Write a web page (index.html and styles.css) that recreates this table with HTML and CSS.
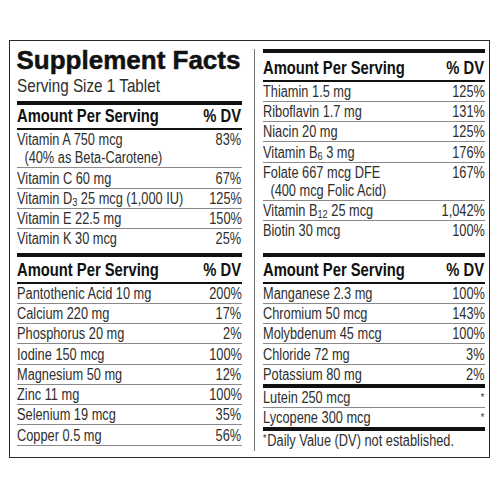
FILE: index.html
```html
<!DOCTYPE html>
<html lang="en">
<head>
<meta charset="utf-8">
<title>Supplement Facts</title>
<link rel="stylesheet" href="styles.css">
</head>
<body>
<div class="label">
  <section class="cell tl">
    <h1 class="title">Supplement Facts</h1>
    <p class="serving"><span class="t">Serving Size 1 Tablet</span></p>
    <div class="bar"></div>
    <div class="head"><span class="t">Amount Per Serving</span><span class="v">% DV</span></div>
    <div class="row"><span class="t">Vitamin A 750 mcg<span class="ind">(40% as Beta-Carotene)</span></span><span class="v">83%</span></div>
    <div class="row"><span class="t">Vitamin C 60 mg</span><span class="v">67%</span></div>
    <div class="row"><span class="t">Vitamin D<sub>3</sub> 25 mcg (1,000 IU)</span><span class="v">125%</span></div>
    <div class="row"><span class="t">Vitamin E 22.5 mg</span><span class="v">150%</span></div>
    <div class="row nb"><span class="t">Vitamin K 30 mcg</span><span class="v">25%</span></div>
  </section>
  <div class="divider"></div>
  <section class="cell tr">
    <div class="bar"></div>
    <div class="head"><span class="t">Amount Per Serving</span><span class="v">% DV</span></div>
    <div class="row"><span class="t">Thiamin 1.5 mg</span><span class="v">125%</span></div>
    <div class="row"><span class="t">Riboflavin 1.7 mg</span><span class="v">131%</span></div>
    <div class="row"><span class="t">Niacin 20 mg</span><span class="v">125%</span></div>
    <div class="row"><span class="t">Vitamin B<sub>6</sub> 3 mg</span><span class="v">176%</span></div>
    <div class="row"><span class="t">Folate 667 mcg DFE<span class="ind">(400 mcg Folic Acid)</span></span><span class="v">167%</span></div>
    <div class="row"><span class="t">Vitamin B<sub>12</sub> 25 mcg</span><span class="v">1,042%</span></div>
    <div class="row nb"><span class="t">Biotin 30 mcg</span><span class="v">100%</span></div>
  </section>
  <section class="cell bl">
    <div class="bar"></div>
    <div class="head"><span class="t">Amount Per Serving</span><span class="v">% DV</span></div>
    <div class="row"><span class="t">Pantothenic Acid 10 mg</span><span class="v">200%</span></div>
    <div class="row"><span class="t">Calcium 220 mg</span><span class="v">17%</span></div>
    <div class="row"><span class="t">Phosphorus 20 mg</span><span class="v">2%</span></div>
    <div class="row"><span class="t">Iodine 150 mcg</span><span class="v">100%</span></div>
    <div class="row"><span class="t">Magnesium 50 mg</span><span class="v">12%</span></div>
    <div class="row"><span class="t">Zinc 11 mg</span><span class="v">100%</span></div>
    <div class="row"><span class="t">Selenium 19 mcg</span><span class="v">35%</span></div>
    <div class="row"><span class="t">Copper 0.5 mg</span><span class="v">56%</span></div>
  </section>
  <section class="cell br">
    <div class="bar"></div>
    <div class="head"><span class="t">Amount Per Serving</span><span class="v">% DV</span></div>
    <div class="row"><span class="t">Manganese 2.3 mg</span><span class="v">100%</span></div>
    <div class="row"><span class="t">Chromium 50 mcg</span><span class="v">143%</span></div>
    <div class="row"><span class="t">Molybdenum 45 mcg</span><span class="v">100%</span></div>
    <div class="row"><span class="t">Chloride 72 mg</span><span class="v">3%</span></div>
    <div class="row nb"><span class="t">Potassium 80 mg</span><span class="v">2%</span></div>
    <div class="bar"></div>
    <div class="row"><span class="t">Lutein 250 mcg</span><span class="v star">*</span></div>
    <div class="row nb"><span class="t">Lycopene 300 mcg</span><span class="v star">*</span></div>
    <div class="bar"></div>
    <p class="foot"><span class="t"><span class="ast">*</span>Daily Value (DV) not established.</span></p>
  </section>
</div>
</body>
</html>
```
FILE: styles.css
```css
body {
  margin: 0;
  background: #fff;
}

.label {
  box-sizing: border-box;
  margin: 40px 0 0 9px;
  width: 481px;
  height: 418px;
  border: 1.5px solid #2a2a2a;
  padding: 0 3.5px 0 6.5px;
  display: grid;
  grid-template-columns: 225px 21px 222px;
  grid-template-rows: 211.5px 1fr;
  font-family: "Liberation Sans", Arial, sans-serif;
  color: #2e2e2e;
}

.tl { grid-column: 1; grid-row: 1; }
.tr { grid-column: 3; grid-row: 1; padding-top: 7.5px; }
.bl { grid-column: 1; grid-row: 2; }
.br { grid-column: 3; grid-row: 2; }

.divider {
  grid-column: 2;
  grid-row: 1 / 3;
  width: 1px;
  margin: 7.5px 0 6.5px 12px;
  background: #777;
}

/* condensed lettering */
.t {
  display: inline-block;
  min-width: 0;
  flex: 0 1 auto;
  transform: scaleX(0.82);
  transform-origin: 0 50%;
}

.v {
  display: inline-block;
  flex: none;
  transform: scaleX(0.82);
  transform-origin: 100% 50%;
}

.title {
  margin: 3.5px 0 0;
  font: bold 26px/30px "Liberation Sans", Arial, sans-serif;
  color: #111;
  -webkit-text-stroke: 0.5px #111;
  white-space: nowrap;
}

.serving {
  margin: 1.5px 0 0;
  font-size: 18.6px;
  line-height: 20px;
  white-space: nowrap;
}

.bar {
  height: 4px;
  background: #111;
}

.tl .bar { margin-top: 4.5px; }

.head {
  display: flex;
  justify-content: space-between;
  font-weight: bold;
  font-size: 18px;
  line-height: 23px;
  padding-top: 2px;
  border-bottom: 2px solid #111;
  color: #111;
  white-space: nowrap;
}

.tl .head { padding-top: 0.5px; }
.tr .head { padding-top: 4px; }

.row {
  display: flex;
  justify-content: space-between;
  align-items: flex-start;
  font-size: 15.6px;
  line-height: 18px;
  padding-top: 1.25px;
  border-bottom: 1px solid #8a8a8a;
  white-space: nowrap;
}

.row.nb { border-bottom: 0; }

.ind {
  display: block;
  padding-left: 9px;
}

sub {
  font-size: 0.72em;
  vertical-align: -2px;
  line-height: 0;
}

.star {
  font-size: 11px;
  line-height: 14px;
  padding-top: 1px;
}

.ast {
  font-size: 11px;
  line-height: 0;
  vertical-align: 4px;
  margin-right: 1px;
}

.foot {
  margin: 0;
  font-size: 15.6px;
  line-height: 18px;
  padding-top: 0.5px;
  white-space: nowrap;
}
```
